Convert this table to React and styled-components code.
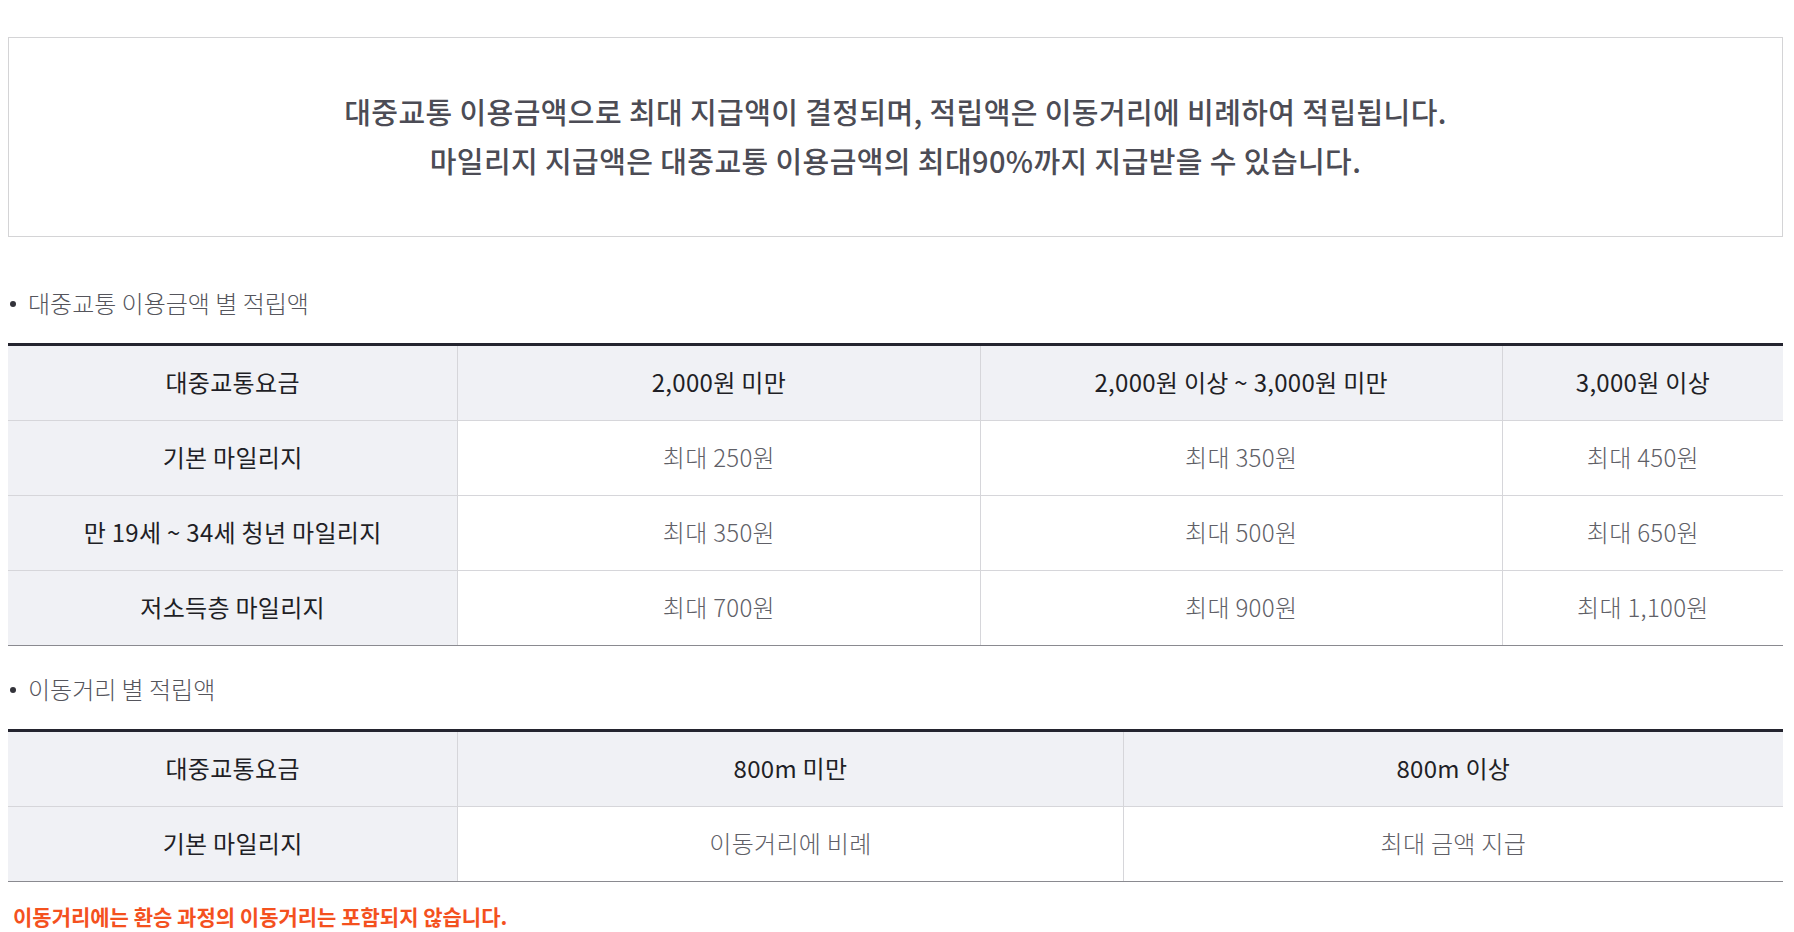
import React from 'react';
import styled, { createGlobalStyle } from 'styled-components';

const GlobalStyle = createGlobalStyle`
    body {
        margin: 0;
        background: #ffffff;
        font-family: "Noto Sans CJK KR", "Noto Sans", sans-serif;
    }
`

const Page = styled.div`
    padding: 37px 11px 40px 8px;
`

const InfoBox = styled.div`
    border: 1px solid #d4d4d6;
    height: 196px;
    padding-bottom: 2px;
    display: flex;
    flex-direction: column;
    justify-content: center;
    align-items: center;
    color: #4c4c55;
    font-size: 29px;
    font-weight: 500;
    letter-spacing: 0.4px;
    line-height: 49px;
    text-align: center;
`

const SectionLabel = styled.div`
    display: flex;
    align-items: center;
    margin: ${props => props.$top}px 0 21px;
    height: 33px;
    padding-bottom: 3px;
    color: #55555c;
    font-size: 24px;
    font-weight: 300;
    &::before{
        content: '';
        width: 6px;
        height: 6px;
        border-radius: 50%;
        background-color: #33333a;
        margin: 3px 12px 0 2px;
    }
`

const Table = styled.div`
    display: grid;
    grid-template-columns: ${props => props.$cols};
    border-top: 3px solid #24242f;
    border-bottom: 1px solid #8a8a90;
`

const Cell = styled.div`
    height: 70px;
    padding-bottom: 4px;
    display: flex;
    align-items: center;
    justify-content: center;
    font-size: 24px;
    letter-spacing: 0.3px;
    border-top: ${props => props.$first ? 'none' : '1px solid #d6d6da'};
    border-left: ${props => props.$lead ? 'none' : '1px solid #d6d6da'};
    background-color: ${props => props.$head ? '#f0f1f5' : '#ffffff'};
    color: ${props => props.$head ? '#1f1f26' : '#606067'};
    font-weight: ${props => props.$head ? 400 : 300};
`

const Notice = styled.p`
    margin: 19px 0 0 5px;
    color: #f4511e;
    font-size: 21px;
    font-weight: 700;
    letter-spacing: 0;
    line-height: 30px;
`

const fareTable = {
    cols: '449fr 522fr 522fr 281fr',
    head: ['대중교통요금', '2,000원 미만', '2,000원 이상 ~ 3,000원 미만', '3,000원 이상'],
    rows: [
        ['기본 마일리지', '최대 250원', '최대 350원', '최대 450원'],
        ['만 19세 ~ 34세 청년 마일리지', '최대 350원', '최대 500원', '최대 650원'],
        ['저소득층 마일리지', '최대 700원', '최대 900원', '최대 1,100원'],
    ]
}

const distanceTable = {
    cols: '449fr 665fr 660fr',
    head: ['대중교통요금', '800m 미만', '800m 이상'],
    rows: [
        ['기본 마일리지', '이동거리에 비례', '최대 금액 지급'],
    ]
}

const MileageTable = ({data}) => (
    <Table $cols={data.cols}>
        {data.head.map((text, i) => (
            <Cell key={'h' + i} $head $first $lead={i === 0}>{text}</Cell>
        ))}
        {data.rows.map((row, r) => row.map((text, i) => (
            <Cell key={r + '-' + i} $head={i === 0} $lead={i === 0}>{text}</Cell>
        )))}
    </Table>
)

const App = () => {
    return (
        <Page>
            <GlobalStyle />
            <InfoBox>
                <div>대중교통 이용금액으로 최대 지급액이 결정되며, 적립액은 이동거리에 비례하여 적립됩니다.</div>
                <div>마일리지 지급액은 대중교통 이용금액의 최대90%까지 지급받을 수 있습니다.</div>
            </InfoBox>
            <SectionLabel $top={49}>대중교통 이용금액 별 적립액</SectionLabel>
            <MileageTable data={fareTable} />
            <SectionLabel $top={26}>이동거리 별 적립액</SectionLabel>
            <MileageTable data={distanceTable} />
            <Notice>이동거리에는 환승 과정의 이동거리는 포함되지 않습니다.</Notice>
        </Page>
    );
};

export default App;
